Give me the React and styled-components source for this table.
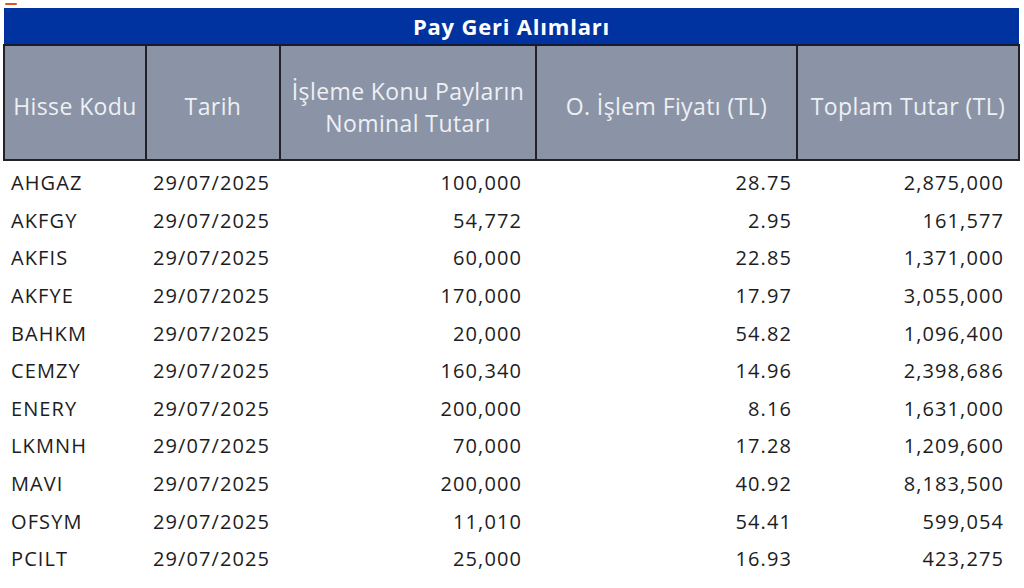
import React from "react";
import styled, { createGlobalStyle } from "styled-components";

const rows = [
  ["AHGAZ", "29/07/2025", "100,000", "28.75", "2,875,000"],
  ["AKFGY", "29/07/2025", "54,772", "2.95", "161,577"],
  ["AKFIS", "29/07/2025", "60,000", "22.85", "1,371,000"],
  ["AKFYE", "29/07/2025", "170,000", "17.97", "3,055,000"],
  ["BAHKM", "29/07/2025", "20,000", "54.82", "1,096,400"],
  ["CEMZY", "29/07/2025", "160,340", "14.96", "2,398,686"],
  ["ENERY", "29/07/2025", "200,000", "8.16", "1,631,000"],
  ["LKMNH", "29/07/2025", "70,000", "17.28", "1,209,600"],
  ["MAVI", "29/07/2025", "200,000", "40.92", "8,183,500"],
  ["OFSYM", "29/07/2025", "11,010", "54.41", "599,054"],
  ["PCILT", "29/07/2025", "25,000", "16.93", "423,275"],
];

const cols = [
  { w: 142, align: "left", pad: "0 0 0 7px" },
  { w: 134, align: "left", pad: "0 0 0 7px" },
  { w: 256, align: "right", pad: "0 14px 0 0" },
  { w: 261, align: "right", pad: "0 5px 0 0" },
  { w: 222, align: "right", pad: "0 15px 0 0" },
];

export default function App() {
  return (
    <Page>
      <GlobalStyle />
      <Mark />
      <Table>
        <colgroup>
          {cols.map((c, i) => (
            <col key={i} style={{ width: c.w }} />
          ))}
        </colgroup>
        <thead>
          <tr>
            <Title colSpan={5}>Pay Geri Alımları</Title>
          </tr>
          <tr>
            <Head>Hisse Kodu</Head>
            <Head>Tarih</Head>
            <Head two>
              İşleme Konu Payların
              <br />
              Nominal Tutarı
            </Head>
            <Head>O. İşlem Fiyatı (TL)</Head>
            <Head>Toplam Tutar (TL)</Head>
          </tr>
        </thead>
        <tbody>
          <Spacer>
            <td colSpan={5} />
          </Spacer>
          {rows.map((r) => (
            <Row key={r[0]}>
              {r.map((v, i) => (
                <Cell key={i} align={cols[i].align} pad={cols[i].pad}>
                  {v}
                </Cell>
              ))}
            </Row>
          ))}
        </tbody>
      </Table>
    </Page>
  );
}

const GlobalStyle = createGlobalStyle`
  body {
    margin: 0;
    background: #ffffff;
    font-family: "Open Sans", "Noto Sans", sans-serif;
  }
`;

const Page = styled.div`
  width: 1024px;
  height: 588px;
  overflow: hidden;
  padding: 3px 6px 0 3px;
  box-sizing: border-box;
`;

const Mark = styled.div`
  width: 12px;
  height: 2px;
  margin-left: 2px;
  margin-bottom: 3px;
  background: #e0502a;
  border-radius: 1px;
`;

const Table = styled.table`
  width: 1015px;
  border-collapse: collapse;
  table-layout: fixed;
`;

const Title = styled.th`
  height: 36px;
  padding: 0;
  background: #0033a0;
  color: #ffffff;
  font-size: 22px;
  font-weight: 700;
  letter-spacing: 0.8px;
  text-align: center;
  border-bottom: 2px solid #1a1a2a;
`;

const Head = styled.th`
  height: 104px;
  padding: 0;
  background: #8a94a6;
  color: #eef0f4;
  font-size: 23px;
  font-weight: 400;
  letter-spacing: 0.4px;
  line-height: ${(p) => (p.two ? "32px" : "1.2")};
  text-align: center;
  vertical-align: middle;
  border: 2px solid #222226;
  white-space: nowrap;
  padding-top: ${(p) => (p.two ? "8px" : "9px")};
  padding-bottom: 0;
`;

const Spacer = styled.tr`
  height: 4px;
  td {
    padding: 0;
  }
`;

const Row = styled.tr`
  height: 37.6px;
`;

const Cell = styled.td`
  padding: ${(p) => p.pad};
  text-align: ${(p) => p.align};
  font-size: 20px;
  letter-spacing: 1.1px;
  color: #1c1c22;
  white-space: nowrap;
  vertical-align: middle;
`;
